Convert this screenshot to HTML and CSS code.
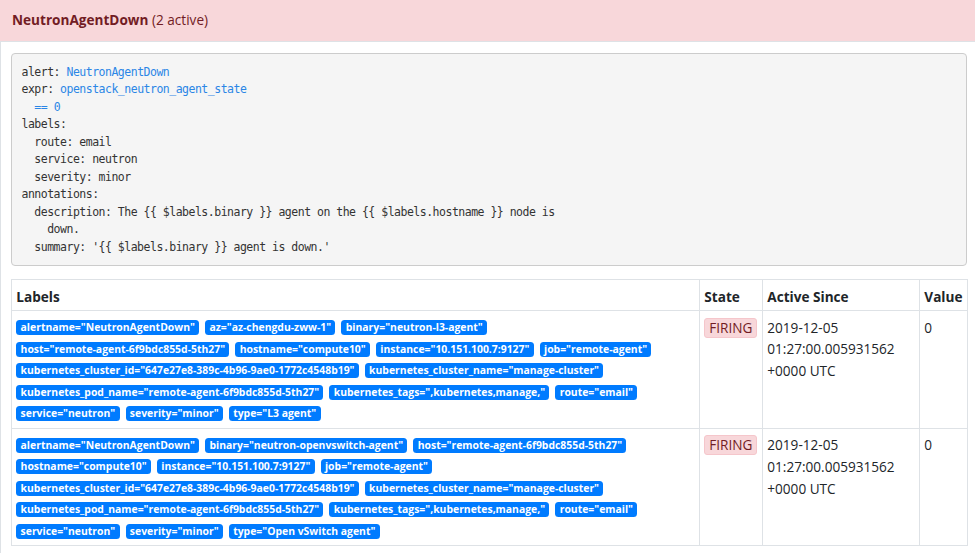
FILE: index.html
```html
<!DOCTYPE html>
<html lang="en">
<head>
<meta charset="utf-8">
<title>Alerts</title>
<link rel="stylesheet" href="styles.css">
</head>
<body>
<div class="alert-group">
  <div class="alert-header"><b>NeutronAgentDown</b> (2 active)</div>
  <div class="alert-details">
    <pre class="rule"><code>alert: <span class="v">NeutronAgentDown</span>
expr: <span class="v">openstack_neutron_agent_state</span>
  <span class="v">== 0</span>
labels:
  route: email
  service: neutron
  severity: minor
annotations:
  description: The {{ $labels.binary }} agent on the {{ $labels.hostname }} node is
    down.
  summary: '{{ $labels.binary }} agent is down.'</code></pre>
    <table class="instances">
      <colgroup>
        <col class="c-labels">
        <col class="c-state">
        <col class="c-since">
        <col class="c-value">
      </colgroup>
      <thead>
        <tr>
          <th>Labels</th>
          <th>State</th>
          <th>Active Since</th>
          <th>Value</th>
        </tr>
      </thead>
      <tbody>
        <tr>
          <td>
            <div class="label-line"><span class="badge">alertname="NeutronAgentDown"</span><span class="badge">az="az-chengdu-zww-1"</span><span class="badge">binary="neutron-l3-agent"</span></div>
            <div class="label-line"><span class="badge">host="remote-agent-6f9bdc855d-5th27"</span><span class="badge">hostname="compute10"</span><span class="badge">instance="10.151.100.7:9127"</span><span class="badge">job="remote-agent"</span></div>
            <div class="label-line"><span class="badge">kubernetes_cluster_id="647e27e8-389c-4b96-9ae0-1772c4548b19"</span><span class="badge">kubernetes_cluster_name="manage-cluster"</span></div>
            <div class="label-line"><span class="badge">kubernetes_pod_name="remote-agent-6f9bdc855d-5th27"</span><span class="badge">kubernetes_tags=",kubernetes,manage,"</span><span class="badge">route="email"</span></div>
            <div class="label-line"><span class="badge">service="neutron"</span><span class="badge">severity="minor"</span><span class="badge">type="L3 agent"</span></div>
          </td>
          <td><span class="state">FIRING</span></td>
          <td>2019-12-05<br>01:27:00.005931562<br>+0000 UTC</td>
          <td>0</td>
        </tr>
        <tr>
          <td>
            <div class="label-line"><span class="badge">alertname="NeutronAgentDown"</span><span class="badge">binary="neutron-openvswitch-agent"</span><span class="badge">host="remote-agent-6f9bdc855d-5th27"</span></div>
            <div class="label-line"><span class="badge">hostname="compute10"</span><span class="badge">instance="10.151.100.7:9127"</span><span class="badge">job="remote-agent"</span></div>
            <div class="label-line"><span class="badge">kubernetes_cluster_id="647e27e8-389c-4b96-9ae0-1772c4548b19"</span><span class="badge">kubernetes_cluster_name="manage-cluster"</span></div>
            <div class="label-line"><span class="badge">kubernetes_pod_name="remote-agent-6f9bdc855d-5th27"</span><span class="badge">kubernetes_tags=",kubernetes,manage,"</span><span class="badge">route="email"</span></div>
            <div class="label-line"><span class="badge">service="neutron"</span><span class="badge">severity="minor"</span><span class="badge">type="Open vSwitch agent"</span></div>
          </td>
          <td><span class="state">FIRING</span></td>
          <td>2019-12-05<br>01:27:00.005931562<br>+0000 UTC</td>
          <td>0</td>
        </tr>
      </tbody>
    </table>
  </div>
</div>
</body>
</html>
```
FILE: styles.css
```css
html, body {
  margin: 0;
  padding: 0;
  background: #fff;
}
body {
  font-family: "Open Sans", "Noto Sans", sans-serif;
  font-size: 13.6px;
  line-height: 21.6px;
  color: #212529;
}
.alert-header {
  height: 42px;
  box-sizing: border-box;
  padding: 9px 12px 0;
  background: #f8d7da;
  color: #721c24;
  border-bottom: 1px solid #dee2e6;
}
.alert-header b {
  font-weight: 700;
}
.alert-details {
  border-left: 1px solid #dee2e6;
  padding: 11px 8px 10px 10px;
}
.rule {
  margin: 0;
  padding: 9.5px 9.5px 9px;
  background: #f5f5f5;
  border: 1px solid #ccc;
  border-radius: 4px;
  font-family: "Liberation Mono", "DejaVu Sans Mono", monospace;
  font-size: 11.5px;
  letter-spacing: -0.5px;
  line-height: 17.5px;
  color: #333;
  white-space: pre;
  overflow: hidden;
}
.rule .v {
  color: #2b86e6;
}
.instances {
  margin-top: 13px;
  width: 100%;
  border-collapse: collapse;
  table-layout: fixed;
}
.instances th,
.instances td {
  border: 1px solid #dee2e6;
  padding: 5.6px 4.3px 3px;
  text-align: left;
  overflow: hidden;
}
.instances th {
  font-weight: 700;
  vertical-align: bottom;
}
.instances td {
  vertical-align: top;
}
.c-labels { width: 688px; }
.c-state { width: 63px; }
.c-since { width: 157px; }
.c-value { width: 48px; }
.label-line {
  display: flex;
  align-items: center;
  gap: 6px;
  height: 21.6px;
}
.badge {
  display: inline-block;
  background: #007bff;
  color: #fff;
  font-weight: 700;
  font-size: 10.4px;
  line-height: 15px;
  height: 15px;
  padding: 0 4.3px;
  border-radius: 3.5px;
  white-space: nowrap;
}
.state {
  display: inline-block;
  margin-top: 1px;
  padding: 0 4px;
  line-height: 18px;
  background: #f8d7da;
  color: #721c24;
  border: 1px solid #f5c6cb;
  border-radius: 3px;
}
```
